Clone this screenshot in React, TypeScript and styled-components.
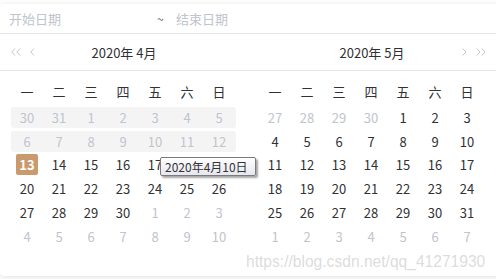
import React from "react";
import styled, { createGlobalStyle } from "styled-components";

const Global = createGlobalStyle`
  html, body { margin: 0; padding: 0; background: #ffffff; }
  body { font-family: "Microsoft YaHei", "Noto Sans CJK SC", "Liberation Sans", sans-serif; overflow: hidden; }
  #root { width: 496px; height: 279px; position: relative; overflow: hidden; }
`;

const Panel = styled.div`
  position: relative;
  margin-top: 4px;
  width: 510px;
  height: 272px;
  background: #fff;
  border-radius: 4px;
  box-shadow: 0 1px 6px rgba(0, 0, 0, 0.13);
  box-sizing: border-box;
`;

const InputBar = styled.div`
  display: flex;
  align-items: center;
  height: 30px;
  padding-left: 9px;
  border-bottom: 1px solid #e6e6e6;
  width: 496px;
  box-sizing: border-box;
  font-size: 13px;
  color: #c0c4cc;
`;

const Placeholder = styled.span<{ $w: number }>`
  width: ${(p) => p.$w}px;
`;

const Tilde = styled.span`
  width: 19px;
  color: #606266;
  font-size: 12px;
`;

const Body = styled.div`
  display: flex;
  width: 496px;
`;

const Month = styled.div`
  width: 248px;
`;

const Header = styled.div`
  position: relative;
  height: 36px;
  border-bottom: 1px solid #e6e6e6;
  display: flex;
  align-items: center;
  justify-content: center;
  font-size: 13px;
  color: #303133;
`;

const Arrows = styled.div<{ $side: "left" | "right" }>`
  position: absolute;
  top: 0;
  bottom: 0;
  ${(p) => (p.$side === "left" ? "left: 11px;" : "right: 10px;")}
  display: flex;
  align-items: center;
  gap: 9px;
  ${(p) => (p.$side === "right" ? "flex-direction: row-reverse;" : "")}
`;

const Table = styled.div`
  padding: 8px 0 0 11px;
`;

const WeekRow = styled.div`
  display: grid;
  grid-template-columns: repeat(7, 32px);
  height: 25px;
  align-items: center;
  font-size: 13px;
  color: #303133;
`;

const DayRow = styled.div<{ $band?: boolean }>`
  display: grid;
  grid-template-columns: repeat(7, 32px);
  width: 225px;
  height: 21px;
  margin: 2.75px 0;
  align-items: center;
  border-radius: 3px;
  background: ${(p) => (p.$band ? "#f4f4f5" : "transparent")};
`;

const Cell = styled.div<{ $muted?: boolean }>`
  display: flex;
  justify-content: center;
  align-items: center;
  height: 21px;
  font-size: 13px;
  color: ${(p) => (p.$muted ? "#c0c4cc" : "#303133")};
`;

const Selected = styled.span`
  display: flex;
  align-items: center;
  justify-content: center;
  width: 22px;
  height: 21px;
  border-radius: 2px;
  background: #c89a6c;
  color: #fff;
  font-weight: bold;
`;

const WeekCell = styled.div`
  text-align: center;
`;

const Tooltip = styled.div`
  position: absolute;
  left: 160px;
  top: 153px;
  width: 96px;
  height: 19px;
  box-sizing: border-box;
  border: 1px solid #7a7a7a;
  border-radius: 2px;
  background: linear-gradient(#ffffff, #e6e7ef);
  box-shadow: 2px 2px 2px rgba(0, 0, 0, 0.35);
  font-size: 12px;
  color: #333;
  display: flex;
  align-items: center;
  padding-left: 4px;
  white-space: nowrap;
`;

const Watermark = styled.div`
  position: absolute;
  left: 246px;
  top: 249px;
  font-family: "Liberation Sans", Arial, sans-serif;
  font-size: 15.6px;
  color: rgba(190, 190, 190, 0.55);
  white-space: nowrap;
  pointer-events: none;
`;

const Chevron = ({ dir, double }: { dir: "l" | "r"; double?: boolean }) => {
  const single = dir === "l" ? "M4 0.5 L0.8 4 L4 7.5" : "M0.8 0.5 L4 4 L0.8 7.5";
  return (
    <svg width={double ? 10 : 5} height="8" viewBox={double ? "0 0 10 8" : "0 0 5 8"}>
      <path d={single} fill="none" stroke="#c0c4cc" strokeWidth="1" />
      {double && (
        <path d={single} transform="translate(5 0)" fill="none" stroke="#c0c4cc" strokeWidth="1" />
      )}
    </svg>
  );
};

type D = { n: number; muted?: boolean; sel?: boolean };

const weeks = ["一", "二", "三", "四", "五", "六", "日"];

const mk = (arr: number[], mutedIdx: (i: number) => boolean): D[] =>
  arr.map((n, i) => ({ n, muted: mutedIdx(i) }));

const april: { band?: boolean; days: D[] }[] = [
  { band: true, days: mk([30, 31, 1, 2, 3, 4, 5], () => true) },
  { band: true, days: mk([6, 7, 8, 9, 10, 11, 12], () => true) },
  { days: [{ n: 13, sel: true }, ...mk([14, 15, 16, 17, 18, 19], () => false)] },
  { days: mk([20, 21, 22, 23, 24, 25, 26], () => false) },
  { days: mk([27, 28, 29, 30, 1, 2, 3], (i) => i >= 4) },
  { days: mk([4, 5, 6, 7, 8, 9, 10], () => true) },
];

const may: { band?: boolean; days: D[] }[] = [
  { days: mk([27, 28, 29, 30, 1, 2, 3], (i) => i < 4) },
  { days: mk([4, 5, 6, 7, 8, 9, 10], () => false) },
  { days: mk([11, 12, 13, 14, 15, 16, 17], () => false) },
  { days: mk([18, 19, 20, 21, 22, 23, 24], () => false) },
  { days: mk([25, 26, 27, 28, 29, 30, 31], () => false) },
  { days: mk([1, 2, 3, 4, 5, 6, 7], () => true) },
];

const MonthView = ({
  title,
  rows,
  side,
}: {
  title: string;
  rows: { band?: boolean; days: D[] }[];
  side: "left" | "right";
}) => (
  <Month>
    <Header>
      <Arrows $side={side}>
        <Chevron dir={side === "left" ? "l" : "r"} double />
        <Chevron dir={side === "left" ? "l" : "r"} />
      </Arrows>
      {title}
    </Header>
    <Table>
      <WeekRow>
        {weeks.map((w) => (
          <WeekCell key={w}>{w}</WeekCell>
        ))}
      </WeekRow>
      {rows.map((r, ri) => (
        <DayRow key={ri} $band={r.band}>
          {r.days.map((d, di) => (
            <Cell key={di} $muted={d.muted}>
              {d.sel ? <Selected>{d.n}</Selected> : d.n}
            </Cell>
          ))}
        </DayRow>
      ))}
    </Table>
  </Month>
);

export default function App() {
  return (
    <>
      <Global />
      <Panel>
        <InputBar>
          <Placeholder $w={148}>开始日期</Placeholder>
          <Tilde>~</Tilde>
          <Placeholder $w={100}>结束日期</Placeholder>
        </InputBar>
        <Body>
          <MonthView title="2020年 4月" rows={april} side="left" />
          <MonthView title="2020年 5月" rows={may} side="right" />
        </Body>
        <Tooltip>2020年4月10日</Tooltip>
        <Watermark>https://blog.csdn.net/qq_41271930</Watermark>
      </Panel>
    </>
  );
}
